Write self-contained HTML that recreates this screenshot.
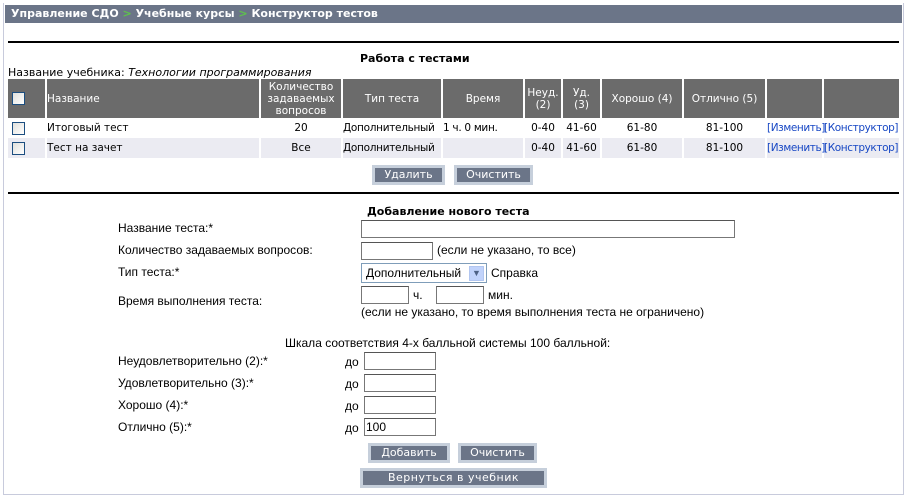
<!DOCTYPE html>
<html><head><meta charset="utf-8"><style>
*{margin:0;padding:0;box-sizing:border-box}
body{width:907px;height:499px;background:#fff;position:relative;overflow:hidden;font-family:"DejaVu Sans",Verdana,sans-serif;font-size:11px;color:#000}
.a{position:absolute;white-space:nowrap}
.frame{left:3px;top:3px;width:901px;height:492px;border:1px solid #c8cbdc;border-top:none}
.hdr{left:5px;top:5px;width:897px;height:18px;background:#6b7588;color:#fff;font-weight:bold;font-size:11px;line-height:18px;padding-left:6px}
.hdr b{color:#5ec34a}
.hr{height:2px;background:#000;left:8px;width:891px}
table{position:absolute;border-collapse:collapse;left:8px;top:79px;width:891px;table-layout:fixed}
td,th{font-weight:normal;font-size:10.5px;text-align:center;border-right:2px solid #fff;padding:0;line-height:12px;overflow:visible;white-space:nowrap}
th{background:#6b6b6b;color:#fff;height:39px}
td{height:20px}
tr.r2 td{background:#ebebf2}
.cb{display:inline-block;width:13px;height:13px;border:1px solid #1c4e80;background:linear-gradient(135deg,#e0e0dc,#fff);vertical-align:middle}
a{color:#1747c4;text-decoration:none;letter-spacing:-0.4px}
.btn{position:absolute;background:#6b7588;border:3px solid #c6cfdb;color:#fff;font-size:11px;text-align:center;line-height:13px}
.f{font-family:"Liberation Sans",Tahoma,sans-serif;font-size:12px}
.in{position:absolute;border:1px solid #777;border-top-color:#555;background:#fff;height:18px}
</style></head><body>
<div class="a frame"></div>
<div class="a hdr">Управление СДО <b>&gt;</b> Учебные курсы <b>&gt;</b> Конструктор тестов</div>
<div class="a hr" style="top:41px"></div>
<div class="a" style="left:360px;top:52px;font-weight:bold">Работа с тестами</div>
<div class="a" style="left:8px;top:66px">Название учебника: <i>Технологии программирования</i></div>
<table>
<colgroup><col style="width:38px"><col style="width:214px"><col style="width:82px"><col style="width:100px"><col style="width:82px"><col style="width:38px"><col style="width:39px"><col style="width:82px"><col style="width:83px"><col style="width:57px"><col style="width:76px"></colgroup>
<tr><th style="text-align:left;padding-left:4px"><span class="cb"></span></th><th style="text-align:left">Название</th><th>Количество<br>задаваемых<br>вопросов</th><th>Тип теста</th><th>Время</th><th>Неуд.<br>(2)</th><th>Уд.<br>(3)</th><th>Хорошо (4)</th><th>Отлично (5)</th><th></th><th style="border:none"></th></tr>
<tr><td style="text-align:left;padding-left:4px"><span class="cb"></span></td><td style="text-align:left">Итоговый тест</td><td>20</td><td style="text-align:left;letter-spacing:-0.3px">Дополнительный</td><td style="text-align:left;letter-spacing:-0.3px">1 ч. 0 мин.</td><td>0-40</td><td>41-60</td><td>61-80</td><td>81-100</td><td style="text-align:left"><a>[Изменить]</a></td><td style="text-align:left;border:none"><a>[Конструктор]</a></td></tr>
<tr class="r2"><td style="text-align:left;padding-left:4px"><span class="cb"></span></td><td style="text-align:left">Тест на зачет</td><td>Все</td><td style="text-align:left;letter-spacing:-0.3px">Дополнительный</td><td></td><td>0-40</td><td>41-60</td><td>61-80</td><td>81-100</td><td style="text-align:left"><a>[Изменить]</a></td><td style="text-align:left;border:none"><a>[Конструктор]</a></td></tr>
</table>
<div class="btn" style="left:372px;top:165px;width:73px;height:20px">Удалить</div>
<div class="btn" style="left:454px;top:165px;width:79px;height:20px">Очистить</div>
<div class="a hr" style="top:192px"></div>
<div class="a" style="left:367px;top:205px;font-weight:bold;font-family:'DejaVu Sans';font-size:11px">Добавление нового теста</div>
<div class="a f" style="left:118px;top:221px">Название теста:*</div>
<div class="in" style="left:361px;top:220px;width:374px"></div>
<div class="a f" style="left:118px;top:243px">Количество задаваемых вопросов:</div>
<div class="in" style="left:361px;top:242px;width:72px"></div>
<div class="a f" style="left:437px;top:243px">(если не указано, то все)</div>
<div class="a f" style="left:118px;top:265px">Тип теста:*</div>
<div class="in f" style="left:361px;top:263px;width:126px;height:20px;border-color:#7f9db9;padding:2px 4px;line-height:14px">Дополнительный<span style="position:absolute;right:2px;top:2px;width:15px;height:15px;background:#c1d3fb;border:1px solid #b2c6f0;color:#4d6185;font-size:9px;text-align:center;line-height:13px">&#9660;</span></div>
<div class="a f" style="left:491px;top:266px">Справка</div>
<div class="a f" style="left:118px;top:294px">Время выполнения теста:</div>
<div class="in" style="left:361px;top:286px;width:48px"></div>
<div class="a f" style="left:413px;top:288px">ч.</div>
<div class="in" style="left:436px;top:286px;width:48px"></div>
<div class="a f" style="left:488px;top:288px">мин.</div>
<div class="a f" style="left:361px;top:305px">(если не указано, то время выполнения теста не ограничено)</div>
<div class="a f" style="left:285px;top:336px">Шкала соответствия 4-х балльной системы 100 балльной:</div>
<div class="a f" style="left:118px;top:354px">Неудовлетворительно (2):*</div>
<div class="a f" style="left:118px;top:376px">Удовлетворительно (3):*</div>
<div class="a f" style="left:118px;top:398px">Хорошо (4):*</div>
<div class="a f" style="left:118px;top:420px">Отлично (5):*</div>
<div class="a f" style="left:345px;top:355px">до</div>
<div class="a f" style="left:345px;top:377px">до</div>
<div class="a f" style="left:345px;top:399px">до</div>
<div class="a f" style="left:345px;top:421px">до</div>
<div class="in" style="left:364px;top:352px;width:72px"></div>
<div class="in" style="left:364px;top:374px;width:72px"></div>
<div class="in" style="left:364px;top:396px;width:72px"></div>
<div class="in f" style="left:364px;top:418px;width:72px;padding-left:1px;line-height:16px">100</div>
<div class="btn" style="left:368px;top:443px;width:82px;height:20px">Добавить</div>
<div class="btn" style="left:458px;top:443px;width:79px;height:20px">Очистить</div>
<div class="btn" style="left:360px;top:468px;width:187px;height:20px;letter-spacing:0.5px">Вернуться в учебник</div>
</body></html>
